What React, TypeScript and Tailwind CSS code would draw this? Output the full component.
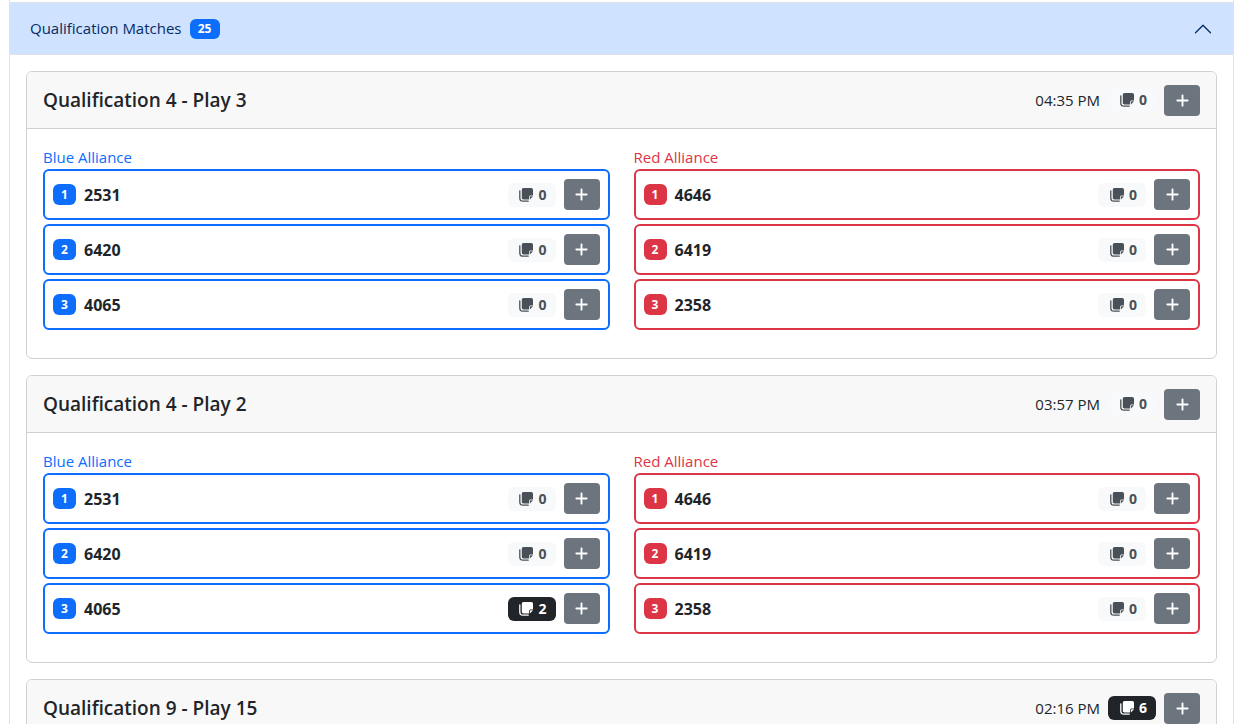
import { useState } from "react";
import { BsChevronUp } from "react-icons/bs";
import { FaPlus } from "react-icons/fa6";

type Team = {
  number: string;
  notes: number;
};

type Match = {
  name: string;
  time: string;
  notes: number;
  blue: Team[];
  red: Team[];
};

const matches: Match[] = [
  {
    name: "Qualification 4 - Play 3",
    time: "04:35 PM",
    notes: 0,
    blue: [
      { number: "2531", notes: 0 },
      { number: "6420", notes: 0 },
      { number: "4065", notes: 0 },
    ],
    red: [
      { number: "4646", notes: 0 },
      { number: "6419", notes: 0 },
      { number: "2358", notes: 0 },
    ],
  },
  {
    name: "Qualification 4 - Play 2",
    time: "03:57 PM",
    notes: 0,
    blue: [
      { number: "2531", notes: 0 },
      { number: "6420", notes: 0 },
      { number: "4065", notes: 2 },
    ],
    red: [
      { number: "4646", notes: 0 },
      { number: "6419", notes: 0 },
      { number: "2358", notes: 0 },
    ],
  },
  {
    name: "Qualification 9 - Play 15",
    time: "02:16 PM",
    notes: 6,
    blue: [],
    red: [],
  },
];

function NotesIcon() {
  return (
    <svg className="w-3.5 h-3.5" viewBox="0 0 14 14" fill="none">
      <path
        fill="currentColor"
        d="M4.5 0h7.800C13.200 0 14 .8 14 1.700v5.800h-2.300c-.9 0-1.600.7-1.600 1.600v2.400H4.500C3.600 11.500 2.800 10.700 2.800 9.800V1.700C2.800.8 3.600 0 4.500 0zM14 8.300 10.900 11.500V9.100c0-.5.4-.8.8-.8z"
      />
      <path
        stroke="currentColor"
        strokeWidth={1.3}
        strokeLinecap="round"
        d="M.8 2.800v7.200c0 1.800 1.400 3.200 3.200 3.200h5.200"
      />
    </svg>
  );
}

function NotesBadge({ count }: { count: number }) {
  return (
    <span
      className={`flex items-center justify-end gap-[5px] w-12 h-6 pr-[9px] rounded-md text-sm font-bold ${
        count > 0 ? "bg-[#212529] text-white" : "bg-[#f8f9fa] text-[#495057]"
      }`}
    >
      <NotesIcon />
      {count}
    </span>
  );
}

function AddButton({ label }: { label: string }) {
  return (
    <button
      type="button"
      aria-label={label}
      className="flex items-center justify-center w-9 h-[31px] rounded bg-[#6c757d] hover:bg-[#5c636a] text-white text-[15px] cursor-pointer"
    >
      <FaPlus />
    </button>
  );
}

function Alliance({ color, teams }: { color: "blue" | "red"; teams: Team[] }) {
  const blue = color === "blue";

  return (
    <section>
      <h3
        className={`text-[15px] leading-6 ${
          blue ? "text-[#0d6efd]" : "text-[#dc3545]"
        }`}
      >
        {blue ? "Blue Alliance" : "Red Alliance"}
      </h3>
      <ul className="space-y-1">
        {teams.map((team, i) => (
          <li
            key={team.number}
            className={`flex items-center gap-2 p-2 border-2 rounded-md ${
              blue ? "border-[#0d6efd]" : "border-[#dc3545]"
            }`}
          >
            <span
              className={`flex items-center justify-center w-[23px] h-[21px] rounded-md text-xs font-bold text-white ${
                blue ? "bg-[#0d6efd]" : "bg-[#dc3545]"
              }`}
            >
              {i + 1}
            </span>
            <span className="flex-1 text-base font-bold">{team.number}</span>
            <NotesBadge count={team.notes} />
            <AddButton label={`Add note for team ${team.number}`} />
          </li>
        ))}
      </ul>
    </section>
  );
}

function MatchCard({ match }: { match: Match }) {
  return (
    <article className="border border-[#d0d1d2] rounded-md overflow-hidden">
      <header className="flex items-center gap-2 px-4 py-3 bg-[#f8f8f8] border-b border-[#d0d1d2]">
        <h2 className="flex-1 text-[19px] leading-8 font-semibold">
          {match.name}
        </h2>
        <time className="text-[15px]">{match.time}</time>
        <NotesBadge count={match.notes} />
        <AddButton label={`Add note for ${match.name}`} />
      </header>
      {match.blue.length > 0 && (
        <div className="grid grid-cols-2 gap-6 px-4 pt-4 pb-7">
          <Alliance color="blue" teams={match.blue} />
          <Alliance color="red" teams={match.red} />
        </div>
      )}
    </article>
  );
}

export default function App() {
  const [open, setOpen] = useState(true);

  return (
    <div className="h-screen overflow-hidden bg-white px-2 font-['Open_Sans','Noto_Sans',sans-serif] text-[#212529]">
      <div className="ml-px min-h-screen border-x border-[#dee2e6] pt-0.5">
        <button
          type="button"
          aria-expanded={open}
          onClick={() => setOpen(!open)}
          className="flex items-center gap-2 w-full h-[53px] px-5 bg-[#cfe2ff] border-y border-[#dee2e6] text-[#052c65] text-[15px] cursor-pointer"
        >
          Qualification Matches
          <span className="flex items-center justify-center w-[30px] h-5 rounded-md bg-[#0d6efd] text-white text-xs font-bold">
            25
          </span>
          <BsChevronUp
            className={`ml-auto w-5 h-5 ${open ? "" : "rotate-180"}`}
          />
        </button>
        {open && (
          <div className="space-y-4 p-4">
            {matches.map((match) => (
              <MatchCard key={match.name} match={match} />
            ))}
          </div>
        )}
      </div>
    </div>
  );
}
